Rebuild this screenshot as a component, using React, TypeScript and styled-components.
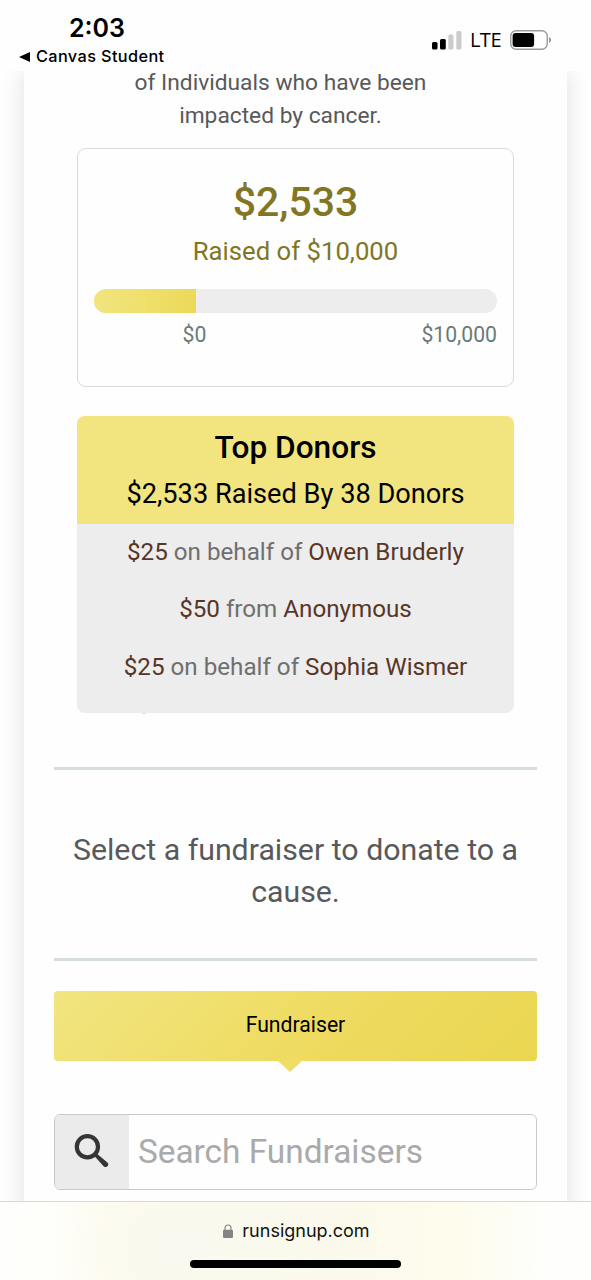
import React from "react";
import styled, { createGlobalStyle } from "styled-components";

const GlobalStyle = createGlobalStyle`
  *, *::before, *::after { box-sizing: border-box; }
  body { margin: 0; background: #fefefe; font-family: Roboto, "Liberation Sans", sans-serif; }
  p, h1, h2, h3 { margin: 0; font-weight: 400; }
`;

const Screen = styled.div`
  width: 591px;
  height: 1280px;
  display: flex;
  flex-direction: column;
  overflow: hidden;
  background: #fefefe;
`;

const StatusBar = styled.header`
  flex: none;
  height: 71px;
  display: flex;
  justify-content: space-between;
  padding: 12px 39px 0 19px;
  color: #000;
  font-family: Inter, "Liberation Sans", sans-serif;
`;

const Clock = styled.div`
  height: 32px;
  padding-left: 50px;
  font-size: 25px;
  line-height: 32px;
  font-weight: 600;
  letter-spacing: 0;
`;

const BackLink = styled.div`
  display: flex;
  align-items: center;
  gap: 6px;
  height: 25px;
  font-size: 16.3px;
  line-height: 25px;
  font-weight: 500;
  letter-spacing: 0.38px;
`;

const Indicators = styled.div`
  display: flex;
  align-items: center;
  height: 55px;
`;

const Network = styled.span`
  margin: 0 9px 0 8px;
  font-family: "Open Sans", "Noto Sans", sans-serif;
  font-size: 20px;
  line-height: 24px;
  font-weight: 500;
  letter-spacing: -0.5px;
`;

const Viewport = styled.main`
  flex: 1;
  min-height: 0;
  overflow: hidden;
  padding: 0 24px;
`;

const Sheet = styled.div`
  width: 543px;
  height: 1150px;
  padding: 0 30.4px;
  background: #fefefe;
  box-shadow: 0 0 22px rgba(0, 0, 0, 0.12);
`;

const Mission = styled.div`
  height: 77px;
  padding-right: 30px;
  color: #58595a;
  font-size: 22.75px;
  text-align: center;
`;

const MissionLine = styled.p<{ $height: number }>`
  line-height: ${(p) => p.$height}px;
`;

const GoalCard = styled.section`
  height: 239px;
  margin: 0 23px;
  padding: 27px 15.6px 0;
  border: 1.5px solid #d5dcdc;
  border-radius: 9px;
  text-align: center;
`;

const Amount = styled.h1`
  height: 50px;
  font-size: 41px;
  line-height: 52px;
  font-weight: 500;
  color: #827624;
`;

const Target = styled.p`
  height: 48px;
  font-size: 25.7px;
  line-height: 50px;
  color: #827624;
`;

const Track = styled.div`
  height: 24px;
  margin-top: 15px;
  border-radius: 12px;
  background: #ededed;
  overflow: hidden;
`;

const Fill = styled.div`
  width: 102px;
  height: 100%;
  background: linear-gradient(100deg, #f2e580, #ecd957);
`;

const Scale = styled.div`
  display: flex;
  justify-content: space-between;
  padding-left: 88.5px;
  font-size: 21.2px;
  line-height: 43px;
  color: #687b78;
`;

const Donors = styled.section`
  height: 297px;
  margin: 29px 23px 0;
  border-radius: 8px;
  background: #ededed;
  overflow: hidden;
  text-align: center;
`;

const DonorsHeader = styled.div`
  height: 107.5px;
  padding-top: 9px;
  background: #f2e580;
  color: #000;
`;

const DonorsTitle = styled.h2`
  font-size: 31.6px;
  line-height: 46px;
  font-weight: 500;
`;

const DonorsTotal = styled.p`
  font-size: 27.2px;
  line-height: 46.5px;
`;

const Donation = styled.p`
  height: 57.7px;
  font-size: 24.2px;
  line-height: 57.4px;
  color: #6f6f6f;
`;

const Strong = styled.span`
  color: #583626;
`;

const Speck = styled.div`
  width: 2px;
  height: 1px;
  margin-left: 89px;
  background: #cfcfcf;
`;

const Divider = styled.hr<{ $top: number }>`
  height: 3px;
  margin: ${(p) => p.$top}px 0 0;
  border: 0;
  background: #d5dcde;
`;

const Prompt = styled.p`
  height: 188px;
  margin: 0 -10px;
  padding-top: 59px;
  font-size: 30.3px;
  line-height: 42px;
  text-align: center;
  color: #58595a;
`;

const Tab = styled.div`
  position: relative;
  height: 69.5px;
  margin-top: 30.5px;
  border-radius: 4px;
  background: linear-gradient(135deg, #f2e580, #eedb60 55%, #ead650);
  color: #000;
  font-size: 21.2px;
  line-height: 67px;
  text-align: center;
  &::after {
    content: "";
    position: absolute;
    left: 222.6px;
    top: 69px;
    border: 13px solid transparent;
    border-top-width: 12.5px;
    border-top-color: #efdd65;
    border-bottom: 0;
  }
`;

const Search = styled.div`
  display: flex;
  height: 75.5px;
  margin-top: 53.5px;
  border: 1.5px solid #c9caca;
  border-radius: 6px;
  overflow: hidden;
`;

const SearchIcon = styled.div`
  flex: none;
  width: 73.5px;
  padding: 18px 0 0 19px;
  background: #ebebeb;
`;

const Placeholder = styled.div`
  padding-left: 9px;
  font-size: 33.4px;
  line-height: 73px;
  color: #aaa;
`;

const BrowserBar = styled.footer`
  flex: none;
  height: 79px;
  border-top: 1px solid #d9d9d8;
  display: flex;
  flex-direction: column;
  align-items: center;
  background:
    radial-gradient(ellipse 120px 70px at 190px 45px, #f9f9f0, transparent),
    linear-gradient(90deg, #fefefd 0, #fefefa 50px, #fdfbee 110px, #fafaed 200px, #fbf9eb 330px, #fdfced 460px, #fefefc 550px);
`;

const Address = styled.div`
  display: flex;
  align-items: center;
  gap: 9px;
  height: 58px;
  padding-left: 2px;
  font-family: Inter, "Liberation Sans", sans-serif;
  font-size: 18px;
  line-height: 56px;
  color: #111;
`;

const HomeIndicator = styled.div`
  width: 211px;
  height: 8px;
  border-radius: 4px;
  background: #000;
`;

const donations = [
  { amount: "$25", link: "on behalf of", name: "Owen Bruderly" },
  { amount: "$50", link: "from", name: "Anonymous" },
  { amount: "$25", link: "on behalf of", name: "Sophia Wismer" },
];

const SignalIcon = () => (
  <svg width="30" height="20" viewBox="0 0 30 20">
    <rect x="0" y="12" width="5.5" height="7.5" rx="1.5" />
    <rect x="8" y="9" width="5.8" height="10.5" rx="1.5" />
    <rect x="16.3" y="4.5" width="5.2" height="15" rx="1.5" fill="#ccc" />
    <rect x="24.3" y="1" width="5.2" height="18.5" rx="1.5" fill="#ccc" />
  </svg>
);

const BatteryIcon = () => (
  <svg width="42" height="20" viewBox="0 0 42 20">
    <rect x="0.75" y="0.75" width="36.5" height="18.5" rx="5.5" fill="none" stroke="#9b9b9b" strokeWidth="1.4" />
    <rect x="2.6" y="3" width="21.5" height="14" rx="3" />
    <path d="M39 7q2.2 1 2.2 3T39 13z" fill="#999" />
  </svg>
);

const MagnifierIcon = () => (
  <svg width="36" height="36" viewBox="0 0 36 36">
    <circle cx="13.4" cy="13.8" r="10.6" fill="none" stroke="#353535" strokeWidth="4.2" />
    <path d="M23 20.8 L33.4 29.6 Q35.2 31.4 33.8 33 Q32 35 29.8 33.4 L20.6 23.2Z" fill="#353535" />
  </svg>
);

const LockIcon = () => (
  <svg width="10" height="14" viewBox="0 0 10 14">
    <rect x="0" y="5.7" width="10" height="8.3" rx="1.2" fill="#858585" />
    <path d="M2 6.5V4a3 3 0 0 1 6 0v2.5" fill="none" stroke="#858585" strokeWidth="1.2" />
  </svg>
);

export default function App() {
  return (
    <>
      <GlobalStyle />
      <Screen>
        <StatusBar>
          <div>
            <Clock>2:03</Clock>
            <BackLink>
              <svg width="11" height="10" viewBox="0 0 11 10">
                <path d="M0 5 11 0v10z" />
              </svg>
              Canvas Student
            </BackLink>
          </div>
          <Indicators>
            <SignalIcon />
            <Network>LTE</Network>
            <BatteryIcon />
          </Indicators>
        </StatusBar>
        <Viewport>
          <Sheet>
            <Mission>
              <MissionLine $height={24}>of Individuals who have been</MissionLine>
              <MissionLine $height={42}>impacted by cancer.</MissionLine>
            </Mission>
            <GoalCard>
              <Amount>$2,533</Amount>
              <Target>Raised of $10,000</Target>
              <Track>
                <Fill />
              </Track>
              <Scale>
                <span>$0</span>
                <span>$10,000</span>
              </Scale>
            </GoalCard>
            <Donors>
              <DonorsHeader>
                <DonorsTitle>Top Donors</DonorsTitle>
                <DonorsTotal>$2,533 Raised By 38 Donors</DonorsTotal>
              </DonorsHeader>
              {donations.map((d) => (
                <Donation key={d.name}>
                  <Strong>{d.amount}</Strong> {d.link} <Strong>{d.name}</Strong>
                </Donation>
              ))}
            </Donors>
            <Speck />
            <Divider $top={52.5} />
            <Prompt>
              Select a fundraiser to donate to a
              <br />
              cause.
            </Prompt>
            <Divider $top={0} />
            <Tab>Fundraiser</Tab>
            <Search>
              <SearchIcon>
                <MagnifierIcon />
              </SearchIcon>
              <Placeholder>Search Fundraisers</Placeholder>
            </Search>
          </Sheet>
        </Viewport>
        <BrowserBar>
          <Address>
            <LockIcon />
            runsignup.com
          </Address>
          <HomeIndicator />
        </BrowserBar>
      </Screen>
    </>
  );
}
